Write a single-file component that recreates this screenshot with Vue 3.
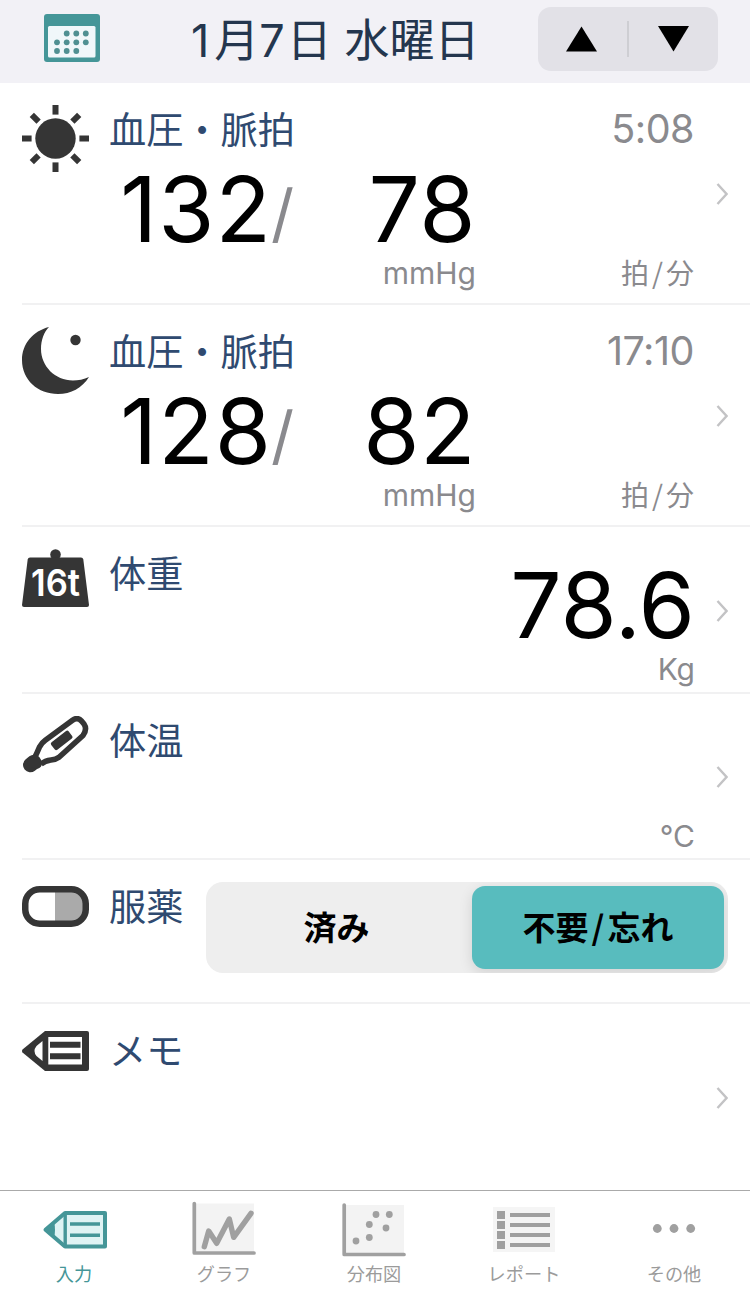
<script setup>
const readings = [
  { icon: 'sun', time: '5:08', high: '132', low: '78' },
  { icon: 'moon', time: '17:10', high: '128', low: '82' }
]
const measures = [
  { icon: 'weight', label: '体重', value: '78.6', unit: 'Kg' },
  { icon: 'temp', label: '体温', value: '', unit: '°C' }
]
const rays = [0, 45, 90, 135, 180, 225, 270, 315]
const calendarDots = [
  [66.7, 33.5], [76.3, 33.5], [85.8, 33.5],
  [57, 42.3], [66.7, 42.3], [76.3, 42.3], [85.8, 42.3],
  [57, 51], [66.7, 51], [76.3, 51]
]
const scatterDots = [[376, 1214.5], [389.3, 1214.5], [369.3, 1224.5], [386, 1228], [369.3, 1237.5], [356, 1241]]
const tabs = [
  { id: 'input', label: '入力' },
  { id: 'graph', label: 'グラフ' },
  { id: 'scatter', label: '分布図' },
  { id: 'report', label: 'レポート' },
  { id: 'more', label: 'その他' }
]
</script>

<template>
  <div class="screen">
    <header class="header">
      <svg class="calendar" viewBox="44 14 56 48" width="56" height="48">
        <rect x="44" y="14" width="56" height="48" rx="3" fill="#459698" />
        <rect x="48" y="26" width="47.5" height="31.5" rx="1.5" fill="#f0f7fa" />
        <circle v-for="(d, i) in calendarDots" :key="i" :cx="d[0]" :cy="d[1]" r="2.9" fill="#4f9092" />
      </svg>
      <h1 class="date"><span class="month">1</span>月<span class="day">7</span>日 水曜日</h1>
      <div class="stepper">
        <svg viewBox="0 0 31 26" width="31" height="26"><path d="M15.5 0.5 31 25.5H0Z" /></svg>
        <i class="divider"></i>
        <svg viewBox="0 0 31 26" width="31" height="26"><path d="M0 0H31L15.5 25.5Z" /></svg>
      </div>
    </header>

    <main class="list">
      <section v-for="r in readings" :key="r.icon" class="row bp">
        <svg v-if="r.icon === 'sun'" class="icon" viewBox="22 105 67 67" width="67" height="67">
          <circle cx="55.5" cy="138.5" r="20.2" fill="#353535" />
          <rect v-for="a in rays" :key="a" x="52.5" y="105" width="6" height="9.6" fill="#353535" :transform="`rotate(${a} 55.5 138.5)`" />
        </svg>
        <svg v-else class="icon" viewBox="22 327 67 67" width="67" height="67">
          <path d="M49 327C33 331 22 344 22 360C22 380 38 394 58 394C71 394 82 388 89 377C84 379.500 78 380.500 73 380.500C55 380.500 41 366 41 349C41 340 44 332 49 327Z" fill="#353535" />
          <circle cx="75.500" cy="340" r="5.200" fill="#353535" />
        </svg>
        <div class="body">
          <div class="line">
            <span class="label">血圧・脈拍</span><span class="time">{{ r.time }}</span>
          </div>
          <div class="values">
            <span class="num high">{{ r.high }}</span><span class="slash">/</span><span class="num low">{{ r.low }}</span>
          </div>
          <div class="units">
            <span class="unit mmhg">mmHg</span><span class="unit jp">拍<span class="bar">/</span>分</span>
          </div>
        </div>
        <svg class="chevron" viewBox="0 0 12 22" width="12" height="22"><path d="M1.500 1 10.500 11 1.500 21" /></svg>
      </section>

      <section v-for="m in measures" :key="m.icon" class="row" :class="m.icon">
        <svg v-if="m.icon === 'weight'" class="icon" viewBox="22 549 67 58" width="67" height="58">
          <circle cx="55.500" cy="554.500" r="5.300" fill="#353535" />
          <path d="M30 557.500H81Q83 557.500 83.300 559.500L89 605Q89 607 87 607H24Q22 607 22 605L27.700 559.500Q28 557.500 30 557.500Z" fill="#353535" />
          <text x="31" y="596" font-size="37.500" textLength="49" lengthAdjust="spacingAndGlyphs" class="ton">16t</text>
        </svg>
        <svg v-else class="icon" viewBox="22 716 67 58" width="67" height="58">
          <path d="M34.500 758Q37 753 39.500 747Q41.500 743 45.300 740.300L72.500 720.300Q77.300 716.700 81.500 721L84 724Q87.500 729 83 735.500L59 757.300Q56 759.500 51 760Q45 760.700 41 764" fill="#fff" stroke="#353535" stroke-width="5.600" stroke-linejoin="round" />
          <path d="M30.300 765 34 762" stroke="#353535" stroke-width="14.600" stroke-linecap="round" />
          <path d="M32 762 37 763.500" stroke="#353535" stroke-width="10" stroke-linecap="round" />
          <rect x="50.700" y="735.700" width="22" height="9.400" rx="1.800" fill="#353535" transform="rotate(-38 61.7 740.4)" />
        </svg>
        <div class="body split">
          <span class="label">{{ m.label }}</span>
          <div class="measure">
            <span class="num total">{{ m.value }}</span>
            <span class="unit">{{ m.unit }}</span>
          </div>
        </div>
        <svg class="chevron" viewBox="0 0 12 22" width="12" height="22"><path d="M1.500 1 10.500 11 1.500 21" /></svg>
      </section>

      <section class="row med">
        <svg class="icon" viewBox="22 886 67 41" width="67" height="41">
          <rect x="25.250" y="889.250" width="60.500" height="34.500" rx="15" fill="#fff" />
          <path d="M55 889H71A15 15 0 0 1 85.750 904V909A15 15 0 0 1 71 924H55Z" fill="#aaa" />
          <rect x="25.250" y="889.250" width="60.500" height="34.500" rx="14.500" fill="none" stroke="#353535" stroke-width="6.500" />
        </svg>
        <span class="label">服薬</span>
        <div class="segment">
          <button class="seg">済み</button>
          <button class="seg on">不要<span class="bar">/</span>忘れ</button>
        </div>
      </section>

      <section class="row memo">
        <svg class="icon" viewBox="22 1031 67 40" width="67" height="40">
          <path d="M45 1031H87Q89 1031 89 1033V1069Q89 1071 87 1071H45L22.500 1052.500Q21.500 1051 22.500 1049.500Z" fill="#353535" />
          <path d="M48.300 1037H82V1064.500H48.300ZM42.500 1041 36.500 1046Q32.500 1051 36.500 1056L42.500 1061Z" fill="#fff" />
          <path d="M50 1044.700H80.500M50 1056.200H80.500" stroke="#353535" stroke-width="6" />
        </svg>
        <div class="body"><span class="label">メモ</span></div>
        <svg class="chevron" viewBox="0 0 12 22" width="12" height="22"><path d="M1.500 1 10.500 11 1.500 21" /></svg>
      </section>
    </main>

    <nav class="tabs">
      <a v-for="t in tabs" :key="t.id" class="tab" :class="{ active: t.id === 'input' }">
        <svg v-if="t.id === 'input'" viewBox="42 1200 66 60" width="66" height="60">
          <path d="M65 1213H105V1246.500H65L45.500 1229.800Z" fill="#dff3f4" stroke="#459698" stroke-width="4" stroke-linejoin="round" />
          <path d="M65.200 1213V1246M70 1224H100M70 1235.200H100" stroke="#459698" stroke-width="3.400" fill="none" />
          <path d="M44 1229.800 54 1221.500Q56 1229.800 54 1238Z" fill="#459698" />
        </svg>
        <svg v-else-if="t.id === 'graph'" viewBox="192 1200 66 60" width="66" height="60">
          <rect x="196" y="1203.500" width="58" height="48" fill="#f3f3f3" />
          <path d="M194.300 1203.500V1253H254" stroke="#a0a0a0" stroke-width="3.700" fill="none" stroke-linecap="round" stroke-linejoin="round" />
          <path d="M204.300 1246.700 208.700 1231 216.700 1243.300 229.300 1219 233.700 1237.300 251 1213.300" stroke="#a0a0a0" stroke-width="5.400" fill="none" stroke-linecap="round" stroke-linejoin="round" />
        </svg>
        <svg v-else-if="t.id === 'scatter'" viewBox="342 1200 66 60" width="66" height="60">
          <rect x="346" y="1205" width="58" height="48" fill="#f3f3f3" />
          <path d="M344.200 1205V1254.500H404" stroke="#a0a0a0" stroke-width="3.700" fill="none" stroke-linecap="round" stroke-linejoin="round" />
          <circle v-for="(d, i) in scatterDots" :key="i" :cx="d[0]" :cy="d[1]" r="3.400" fill="#a0a0a0" />
        </svg>
        <svg v-else-if="t.id === 'report'" viewBox="492 1200 66 60" width="66" height="60">
          <rect x="493" y="1207" width="62" height="45" fill="#f5f5f5" />
          <path d="M497 1215H505M497 1225H505M497 1235H505M497 1245H505" stroke="#a0a0a0" stroke-width="8" />
          <path d="M510 1215H550M510 1225H550M510 1235H550M510 1245H550" stroke="#a0a0a0" stroke-width="3.800" />
        </svg>
        <svg v-else viewBox="642 1200 66 60" width="66" height="60" fill="#a0a0a0">
          <circle cx="657.300" cy="1228.500" r="4.400" /><circle cx="674" cy="1228.500" r="4.400" /><circle cx="690.700" cy="1228.500" r="4.400" />
        </svg>
        <span class="caption">{{ t.label }}</span>
      </a>
    </nav>
  </div>
</template>

<style>
body { background: #fff; }
</style>

<style scoped>
* { box-sizing: border-box; }
.screen {
  width: 750px;
  height: 1289px;
  display: flex;
  flex-direction: column;
  overflow: hidden;
  background: #fff;
  color: #000;
  font-family: Inter, "Noto Sans CJK JP", sans-serif;
}
svg { display: block; flex: none; }
.header {
  height: 83px;
  flex: none;
  background: #f2f1f6;
  display: flex;
  align-items: flex-start;
  padding: 7px 32px 0 44px;
}
.calendar { margin-top: 7px; }
.date {
  flex: 1;
  margin: 0 0 0 91px;
  font: 400 45px/68px Inter, "Noto Sans CJK JP", sans-serif;
  color: #24364e;
  white-space: nowrap;
}
.month { margin-right: 5px; }
.day { margin-right: 2px; }
.stepper {
  width: 180px;
  height: 64px;
  border-radius: 13px;
  background: #e2e1e7;
  display: flex;
  align-items: center;
  justify-content: space-between;
  padding: 0 29px 0 28px;
}
.divider { width: 2px; height: 36px; background: #ceced3; }
.list { flex: 1; }
.row {
  margin-left: 22px;
  padding-right: 22px;
  display: flex;
  align-items: flex-start;
  border-bottom: 2px solid #f1f1f2;
}
.icon { margin-top: 22px; }
.bp { height: 222px; }
.weight { height: 167px; }
.temp { height: 166px; }
.med { height: 144px; }
.med .icon { margin-top: 26px; }
.memo { height: 186px; border-bottom: 0; }
.memo .icon { margin-top: 27px; }
.body { flex: 1; margin-left: 20px; }
.label {
  font: 400 37.2px/43px "Noto Sans CJK JP", sans-serif;
  color: #2f4a70;
  white-space: nowrap;
}
.line {
  margin-top: 24px;
  height: 45px;
  display: flex;
  justify-content: space-between;
}
.time {
  font-size: 39.5px;
  line-height: 44px;
  letter-spacing: -0.5px;
  color: #8a8a8e;
  margin-right: 22px;
}
.values {
  margin-top: 12px;
  height: 90px;
  display: flex;
  align-items: center;
}
.num { font-size: 91px; line-height: 90px; font-weight: 400; }
.high { width: 163px; text-align: right; letter-spacing: 1px; }
.slash { width: 24px; font-size: 64px; line-height: 90px; padding-top: 7px; margin: 0 1px 0 -1px; color: #8a8a8e; }
.low { width: 180px; text-align: right; letter-spacing: 0.5px; }
.units { display: flex; justify-content: space-between; height: 36px; margin-top: 1px; }
.unit { font-size: 30px; line-height: 36px; color: #8a8a8e; }
.mmhg { width: 367px; text-align: right; }
.jp { font: 400 28px/34px "Noto Sans CJK JP", sans-serif; margin-right: 22px; }
.bar { padding: 0 3px; }
.chevron {
  align-self: center;
  margin-top: 2px;
  fill: none;
  stroke: #c3c3c5;
  stroke-width: 2.4;
}
.split { display: flex; justify-content: space-between; }
.split .label, .memo .label, .med .label { display: block; margin-top: 24px; }
.measure {
  display: flex;
  flex-direction: column;
  align-items: flex-end;
  padding: 33px 21px 0 0;
}
.total { height: 91px; }
.med .label { margin-left: 20px; }
.segment {
  width: 522px;
  height: 91px;
  margin: 22px 0 0 auto;
  border-radius: 17px;
  background: #eee;
  padding: 4px;
  display: flex;
  overflow: hidden;
}
.seg {
  flex: 1;
  border: 0;
  border-radius: 13px;
  background: transparent;
  padding: 0 9px 3px 0;
  color: #000;
  font: 700 33px/80px "Noto Sans CJK JP", sans-serif;
}
.seg.on {
  flex: 0 0 252px;
  padding: 0 0 3px;
  background: #58bcbe;
  box-shadow: 0 4px 14px rgba(0, 0, 0, 0.12);
}
.ton { font-family: Inter, sans-serif; font-weight: 600; fill: #fff; }
.tabs {
  height: 99px;
  flex: none;
  border-top: 1px solid #aaa;
  display: flex;
}
.tab {
  flex: 1;
  display: flex;
  flex-direction: column;
  align-items: center;
  padding-top: 9px;
  color: #9b9b9b;
  font: 400 18.2px/26px "Noto Sans CJK JP", sans-serif;
}
.caption { padding-right: 2px; }
.tab.active { color: #459698; }
</style>
